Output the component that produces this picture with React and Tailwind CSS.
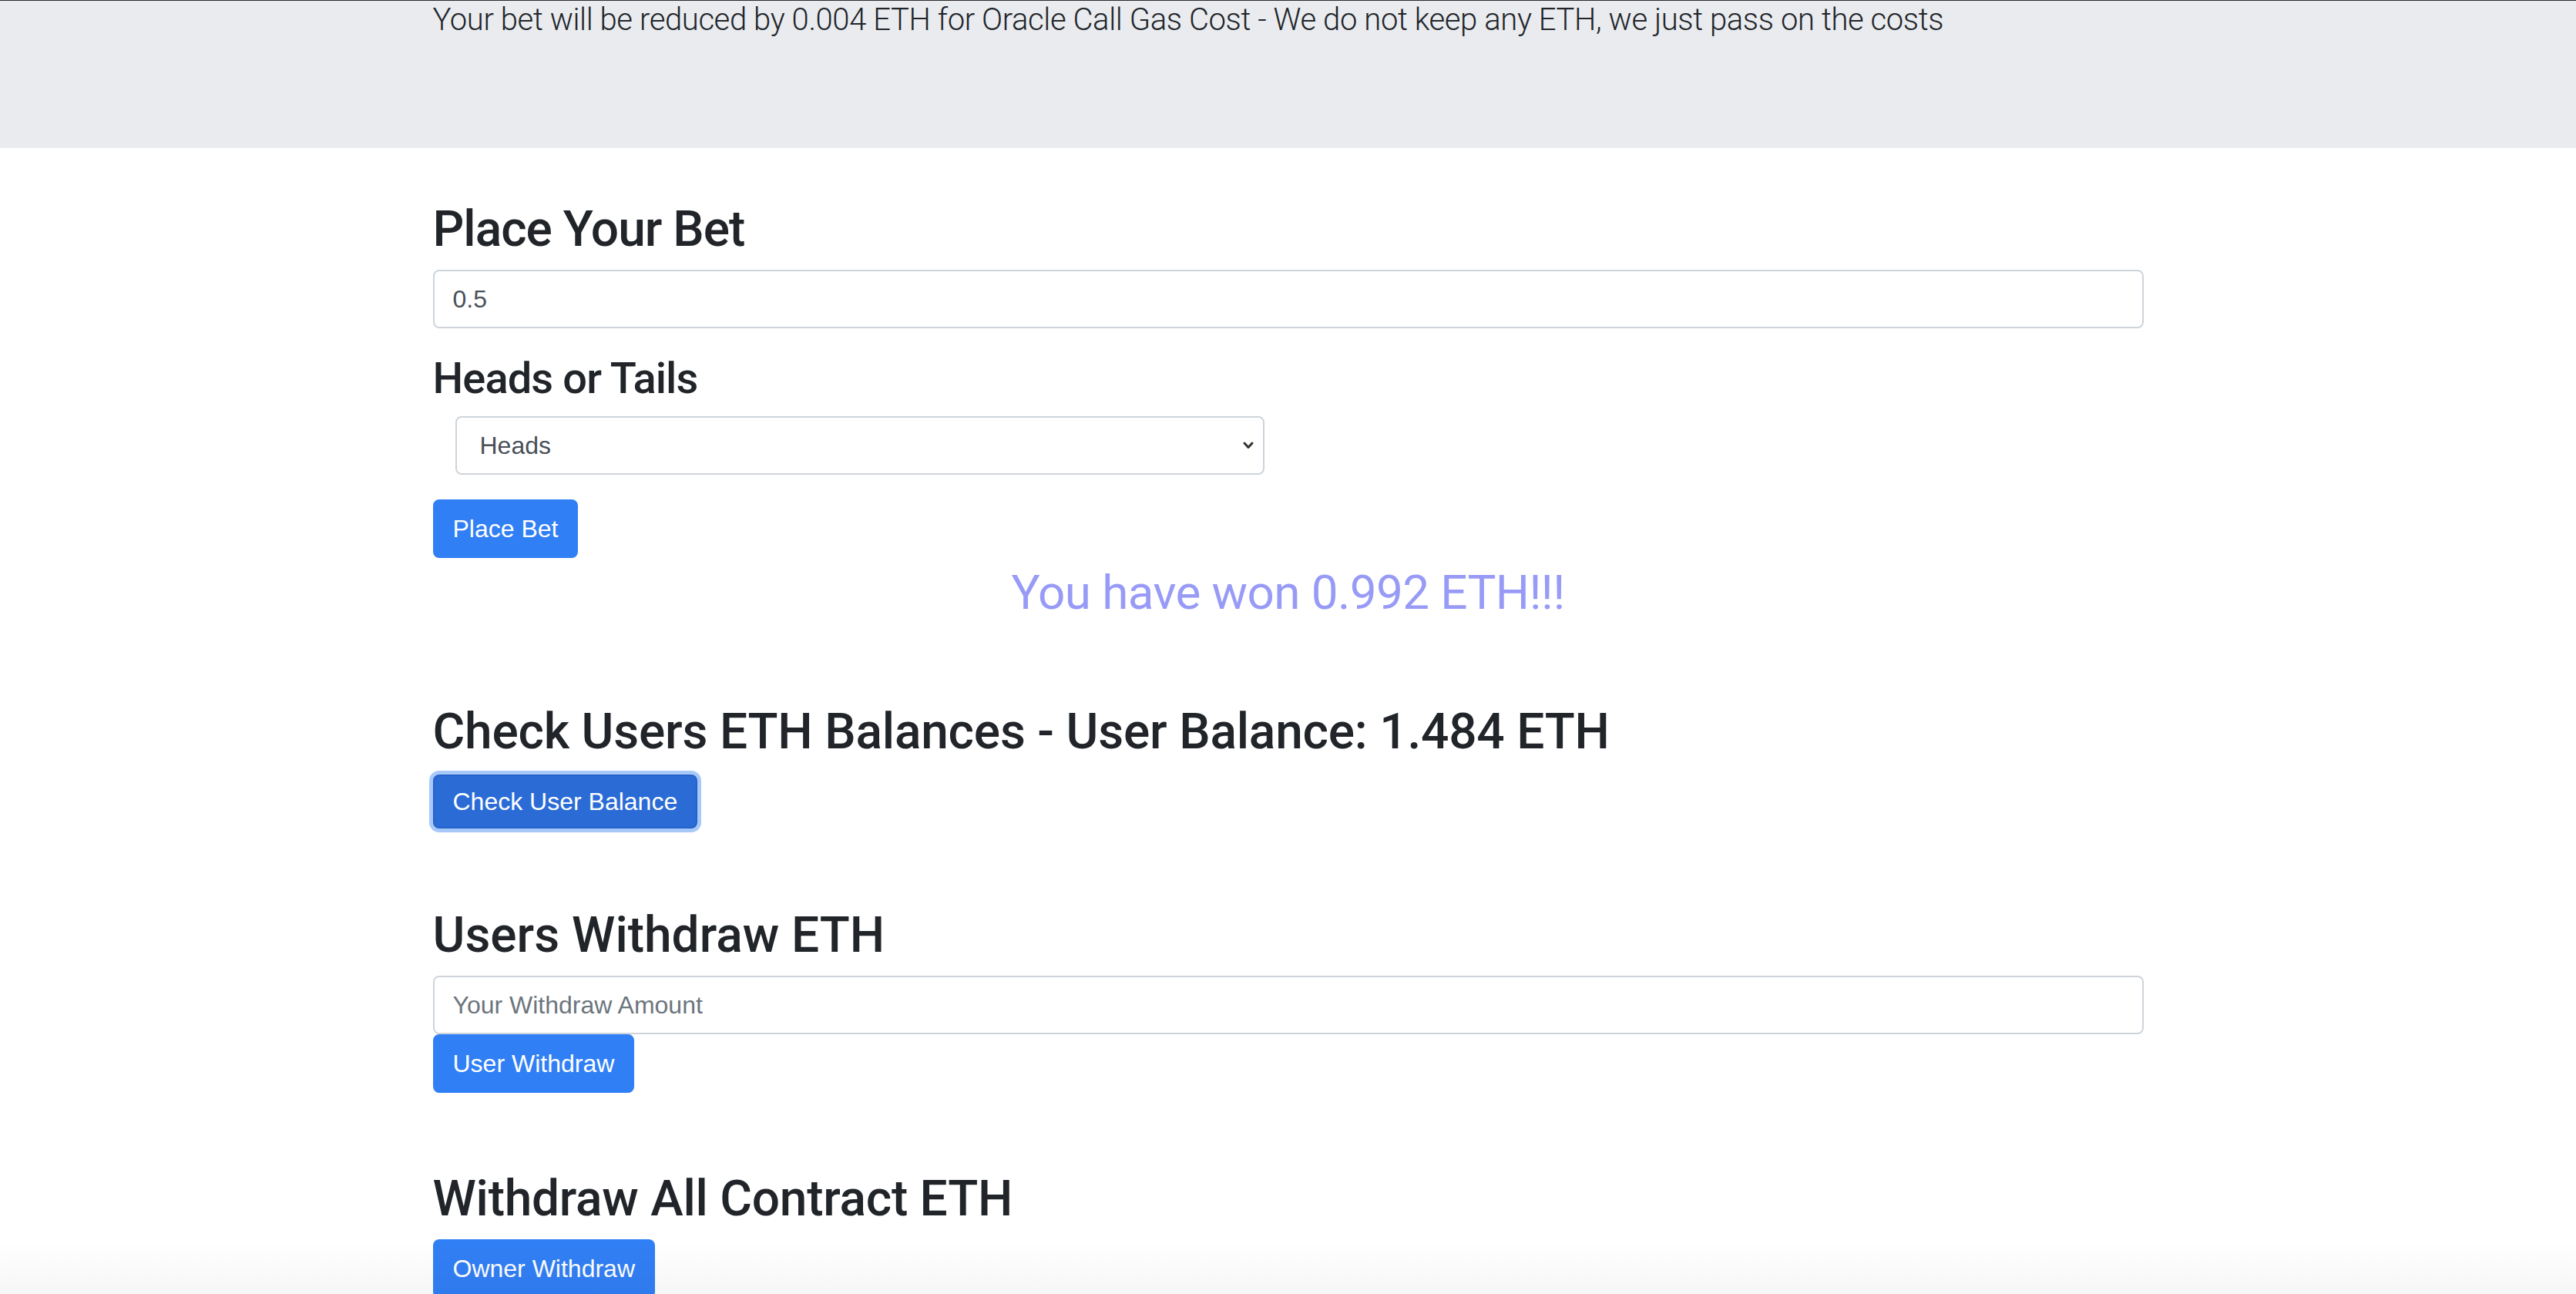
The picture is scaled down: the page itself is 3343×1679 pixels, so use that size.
import React from "react";

const body = "font-['Liberation_Sans',Arial,sans-serif]";
const head = "font-['Roboto','Liberation_Sans',Arial,sans-serif]";

function H2({ children, className = "" }) {
  return (
    <h2 className={`${head} text-[64px] leading-[77px] font-medium text-[#212529] ${className}`}>
      {children}
    </h2>
  );
}

function Btn({ children, className = "" }) {
  return (
    <button
      className={`${body} h-[76px] px-[24px] rounded-[8px] border-2 border-[#317ff5] bg-[#317ff5] text-white text-[32px] leading-[48px] ${className}`}
    >
      {children}
    </button>
  );
}

export default function App() {
  return (
    <div className="relative h-screen w-full overflow-hidden bg-white">
      <div className="h-[192px] border-t border-[#2b2b2b] bg-[#e9ebef]">
        <div className="mx-auto w-[2280px] px-[30px]">
          <p className={`${head} text-[40px] leading-[50px] font-light text-[#212529] tracking-[-0.4px]`}>
            Your bet will be reduced by 0.004 ETH for Oracle Call Gas Cost - We do not keep any ETH, we just pass on the costs
          </p>
        </div>
      </div>

      <div className="mx-auto w-[2280px] px-[30px] pt-[67px]">
        <H2 className="tracking-[-1px]">Place Your Bet</H2>
        <div className="mt-[14px] mb-[32px] flex h-[76px] items-center rounded-[8px] border-2 border-[#ced4da] px-[24px]">
          <span className={`${body} text-[32px] text-[#495057]`}>0.5</span>
        </div>

        <h3 className={`${head} text-[56px] leading-[67px] font-medium text-[#212529] tracking-[-0.9px]`}>Heads or Tails</h3>
        <div className="relative mt-[15px] mb-[32px] ml-[29px] flex h-[76px] w-[1050px] items-center rounded-[8px] border-2 border-[#ced4da] pl-[30px]">
          <span className={`${body} text-[32px] text-[#495057]`}>Heads</span>
          <svg className="absolute right-[12px] top-1/2 -translate-y-1/2" width="14" height="10" viewBox="0 0 14 10">
            <path d="M2 2 L7 7.5 L12 2" fill="none" stroke="#333" strokeWidth="3" strokeLinecap="round" strokeLinejoin="round" />
          </svg>
        </div>

        <Btn>Place Bet</Btn>

        <p className={`${head} mt-[6px] text-center text-[62px] leading-[77px] text-[#989bf6] tracking-[-0.6px]`}>
          You have won 0.992 ETH!!!
        </p>

        <H2 className="mt-[104px] tracking-[-0.2px]">Check Users ETH Balances - User Balance: 1.484 ETH</H2>
        <div className="mt-[17px]">
          <button
            className={`${body} h-[70px] px-[24px] rounded-[8px] border-2 border-[#2561c9] bg-[#2a6bd6] text-white text-[32px] leading-[48px] shadow-[0_0_0_5px_#a6c9f9]`}
          >
            Check User Balance
          </button>
        </div>

        <H2 className="mt-[100px]">Users Withdraw ETH</H2>
        <div className="mt-[14px] flex h-[76px] items-center rounded-[8px] border-2 border-[#ced4da] px-[24px]">
          <span className={`${body} text-[32px] text-[#6c757d]`}>Your Withdraw Amount</span>
        </div>
        <Btn>User Withdraw</Btn>

        <H2 className="mt-[99px] tracking-[-0.25px]">Withdraw All Contract ETH</H2>
        <div className="mt-[14px]">
          <Btn>Owner Withdraw</Btn>
        </div>
      </div>

      <div className="pointer-events-none absolute inset-x-0 bottom-0 h-[70px] bg-gradient-to-b from-transparent to-black/[0.035]" />
    </div>
  );
}
